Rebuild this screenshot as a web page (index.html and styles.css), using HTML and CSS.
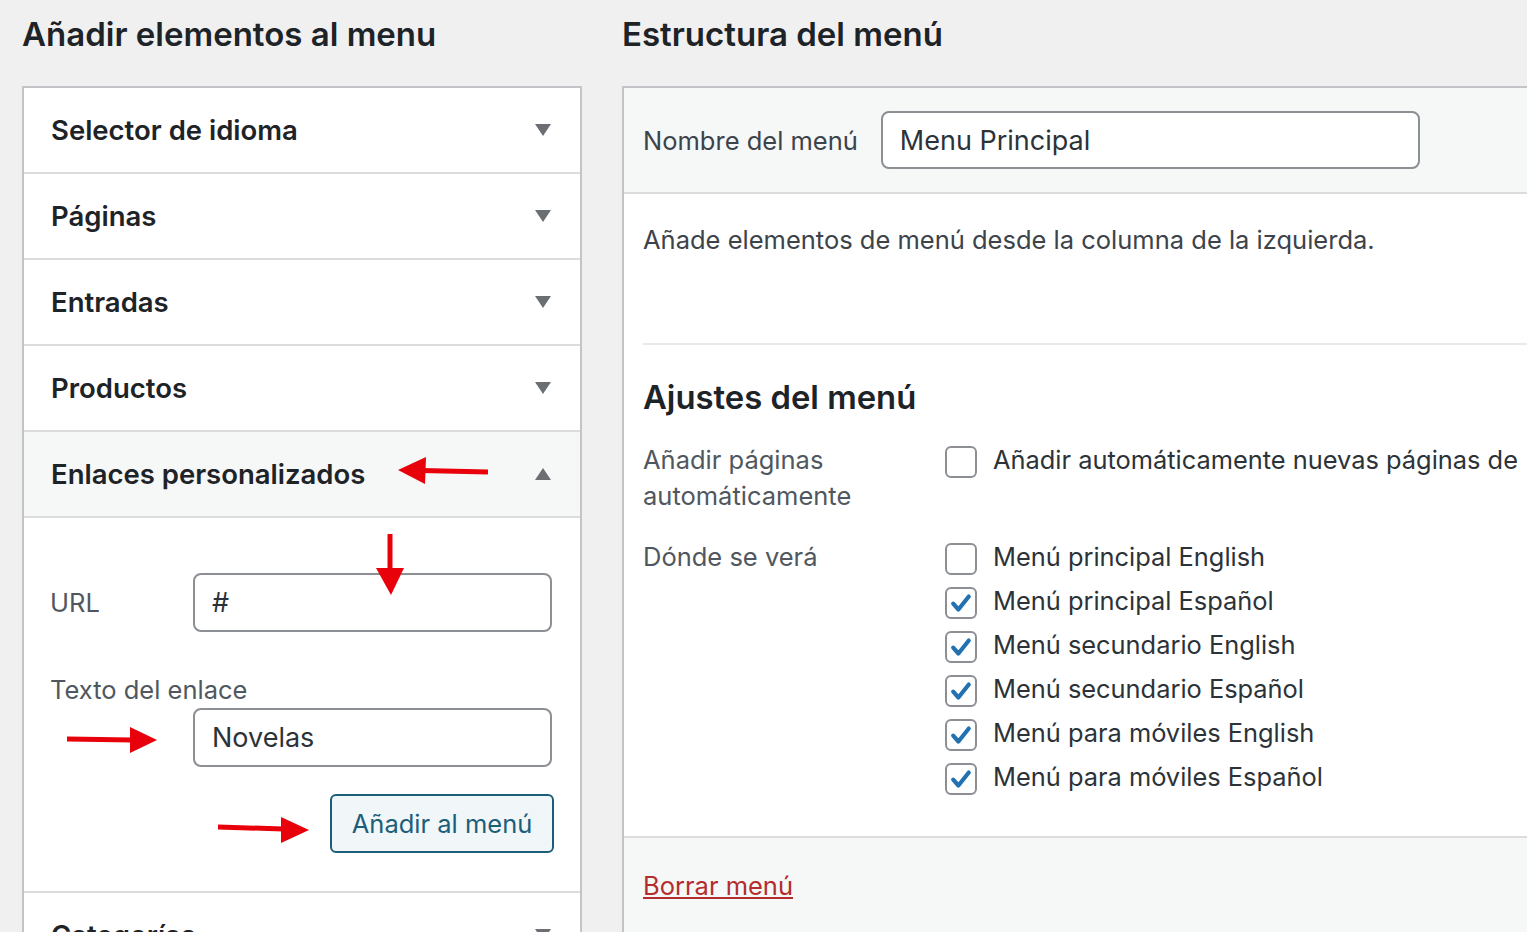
FILE: index.html
```html
<!DOCTYPE html>
<html lang="es">
  <head>
    <meta charset="UTF-8" />
    <meta name="viewport" content="width=device-width, initial-scale=1.0" />
    <title>Menús</title>
    <link rel="stylesheet" href="styles.css">
  </head>
  <body>
    <div class="wrap">
      <!-- Columna izquierda -->
      <div class="col-left">
        <h2 class="col-title">Añadir elementos al menu</h2>
        <div class="accordion">
          <div class="acc-row">
            <span>Selector de idioma</span>
            <span class="arrow down"></span>
          </div>
          <div class="acc-row">
            <span>Páginas</span>
            <span class="arrow down"></span>
          </div>
          <div class="acc-row">
            <span>Entradas</span>
            <span class="arrow down"></span>
          </div>
          <div class="acc-row">
            <span>Productos</span>
            <span class="arrow down"></span>
          </div>
          <div class="acc-row open">
            <span>Enlaces personalizados</span>
            <span class="arrow up"></span>
          </div>
          <div class="acc-content">
            <div class="url-row">
              <label for="url">URL</label>
              <input type="text" id="url" value="#" />
            </div>
            <label class="link-label" for="linktext">Texto del enlace</label>
            <input class="link-input" type="text" id="linktext" value="Novelas" />
            <div class="btn-row">
              <button class="btn-secondary">Añadir al menú</button>
            </div>
          </div>
          <div class="acc-row">
            <span>Categorías</span>
            <span class="arrow down"></span>
          </div>
        </div>
      </div>

      <!-- Columna derecha -->
      <div class="col-right">
        <h2 class="col-title">Estructura del menú</h2>
        <div class="menu-box">
          <div class="menu-header">
            <label for="menuname">Nombre del menú</label>
            <input type="text" id="menuname" value="Menu Principal" />
          </div>
          <div class="menu-body">
            <p class="hint">Añade elementos de menú desde la columna de la izquierda.</p>
            <div class="settings">
              <h3>Ajustes del menú</h3>
              <div class="set-row">
                <div class="set-label">Añadir páginas<br />automáticamente</div>
                <div class="set-options">
                  <div class="opt"><span class="cb"></span>Añadir automáticamente nuevas páginas de</div>
                </div>
              </div>
              <div class="set-row">
                <div class="set-label">Dónde se verá</div>
                <div class="set-options">
                  <div class="opt"><span class="cb"></span>Menú principal English</div>
                  <div class="opt"><span class="cb"><svg viewBox="0 0 20 20"><path d="M4 10.5l4 4.5 8-10" fill="none" stroke="#2271b1" stroke-width="3.2" stroke-linecap="round" stroke-linejoin="round"/></svg></span>Menú principal Español</div>
                  <div class="opt"><span class="cb"><svg viewBox="0 0 20 20"><path d="M4 10.5l4 4.5 8-10" fill="none" stroke="#2271b1" stroke-width="3.2" stroke-linecap="round" stroke-linejoin="round"/></svg></span>Menú secundario English</div>
                  <div class="opt"><span class="cb"><svg viewBox="0 0 20 20"><path d="M4 10.5l4 4.5 8-10" fill="none" stroke="#2271b1" stroke-width="3.2" stroke-linecap="round" stroke-linejoin="round"/></svg></span>Menú secundario Español</div>
                  <div class="opt"><span class="cb"><svg viewBox="0 0 20 20"><path d="M4 10.5l4 4.5 8-10" fill="none" stroke="#2271b1" stroke-width="3.2" stroke-linecap="round" stroke-linejoin="round"/></svg></span>Menú para móviles English</div>
                  <div class="opt"><span class="cb"><svg viewBox="0 0 20 20"><path d="M4 10.5l4 4.5 8-10" fill="none" stroke="#2271b1" stroke-width="3.2" stroke-linecap="round" stroke-linejoin="round"/></svg></span>Menú para móviles Español</div>
                </div>
              </div>
            </div>
          </div>
          <div class="menu-footer">
            <a href="#" class="delete">Borrar menú</a>
          </div>
        </div>
      </div>
    </div>

    <!-- flechas rojas de anotación -->
    <svg class="annotations" width="1527" height="932" viewBox="0 0 1527 932">
      <g fill="#e8000b" stroke="#e8000b">
        <line x1="422" y1="470.5" x2="488" y2="472" stroke-width="5" />
        <polygon points="398,470 426,457 425,484" stroke="none" />
        <line x1="390" y1="534" x2="390" y2="570" stroke-width="5" />
        <polygon points="376,568 404,568 391,595" stroke="none" />
        <line x1="67" y1="739" x2="132" y2="740" stroke-width="5" />
        <polygon points="157,740 130,727 130,753" stroke="none" />
        <line x1="218" y1="827" x2="283" y2="829" stroke-width="5" />
        <polygon points="309,830 281,817 281,843" stroke="none" />
      </g>
    </svg>
  </body>
</html>
```

FILE: styles.css
```css
/* Global */
body {
  margin: 0;
  background: #f0f0f1;
  font-family: Inter, Roboto, "Liberation Sans", sans-serif;
  color: #3c434a;
  overflow: hidden;
  height: 932px;
}

.wrap {
  display: flex;
  padding-left: 22px;
  gap: 40px;
}

.col-left {
  flex: 0 0 560px;
  min-width: 0;
}

.col-right {
  flex: 0 0 960px;
  min-width: 0;
}

.col-title {
  margin: 14px 0 32px;
  font-size: 33px;
  line-height: 40px;
  font-weight: 600;
  color: #1d2327;
  white-space: nowrap;
}

/* Accordion */
.accordion {
  border: 2px solid #c3c4c7;
  border-bottom: none;
  background: #fff;
}

.acc-row {
  height: 84px;
  border-bottom: 2px solid #dcdcde;
  display: flex;
  align-items: center;
  justify-content: space-between;
  padding: 0 29px 0 27px;
  font-size: 27.5px;
  font-weight: 600;
  color: #1d2327;
}

.acc-row.open {
  background: #f6f7f7;
}

.arrow {
  width: 0;
  height: 0;
  border-left: 8px solid transparent;
  border-right: 8px solid transparent;
}

.arrow.down {
  border-top: 12px solid #6b6f74;
}

.arrow.up {
  border-bottom: 12px solid #6b6f74;
}

.acc-content {
  border-bottom: 2px solid #dcdcde;
  padding: 55px 28px 38px 26px;
  font-size: 25.5px;
  color: #50575e;
}

.url-row {
  display: flex;
  align-items: center;
}

.url-row label {
  width: 143px;
  flex-shrink: 0;
}

input[type="text"] {
  box-sizing: border-box;
  height: 59px;
  border: 2px solid #8c8f94;
  border-radius: 8px;
  padding: 0 17px;
  font-family: Inter, Roboto, "Liberation Sans", sans-serif;
  font-size: 27px;
  color: #2c3338;
  background: #fff;
  outline: none;
}

.url-row input {
  flex: 1;
  min-width: 0;
  width: 100%;
}

.link-label {
  display: block;
  margin-top: 40px;
  line-height: 36px;
}

.link-input {
  display: block;
  width: 359px;
  margin-left: 143px;
}

.btn-row {
  display: flex;
  justify-content: flex-end;
  margin: 27px -2px 0 0;
}

.btn-secondary {
  box-sizing: border-box;
  width: 224px;
  height: 59px;
  border: 2px solid #1b5e7a;
  border-radius: 6px;
  background: #f1f6f9;
  color: #1b5e7a;
  font-family: Inter, Roboto, "Liberation Sans", sans-serif;
  font-size: 25.5px;
  cursor: pointer;
}

/* Menu structure */
.menu-box {
  border: 2px solid #c3c4c7;
  border-right: none;
  background: #fff;
}

.menu-header {
  height: 104px;
  background: #f6f7f7;
  border-bottom: 2px solid #dcdcde;
  display: flex;
  align-items: center;
  gap: 23px;
  padding: 0 19px;
  font-size: 25.5px;
  color: #3c434a;
}

.menu-header input {
  width: 539px;
  height: 58px;
}

.menu-body {
  padding: 0 0 0 19px;
}

.hint {
  margin: 28px 0 0;
  padding-bottom: 85px;
  border-bottom: 2px solid #e9e9ea;
  font-size: 25.5px;
  line-height: 36px;
  color: #3c434a;
}

.settings {
  padding-bottom: 41px;
}

.settings h3 {
  margin: 32px 0 25px;
  font-size: 32.8px;
  line-height: 40px;
  font-weight: 600;
  color: #1d2327;
}

.set-row {
  display: flex;
  margin-bottom: 25px;
}

.set-row:last-child {
  margin-bottom: 0;
}

.set-label {
  width: 302px;
  flex-shrink: 0;
  font-size: 25.5px;
  line-height: 36px;
  color: #50575e;
}

.set-options {
  display: flex;
  flex-direction: column;
  gap: 8px;
}

.opt {
  display: flex;
  align-items: flex-start;
  gap: 16px;
  font-size: 25.4px;
  line-height: 36px;
  color: #2c3338;
  white-space: nowrap;
}

.cb {
  box-sizing: border-box;
  width: 32px;
  height: 32px;
  margin-top: 4px;
  border: 2px solid #8c8f94;
  border-radius: 6px;
  background: #fff;
  flex-shrink: 0;
  display: flex;
  align-items: center;
  justify-content: center;
}

.cb svg {
  width: 26px;
  height: 26px;
}

.menu-footer {
  border-top: 2px solid #dcdcde;
  background: #f6f7f7;
  padding: 30px 19px 40px;
  font-size: 25.5px;
  line-height: 36px;
}

.delete {
  color: #b32d2e;
  text-decoration: underline;
}

.annotations {
  position: absolute;
  top: 0;
  left: 0;
  pointer-events: none;
}
```
